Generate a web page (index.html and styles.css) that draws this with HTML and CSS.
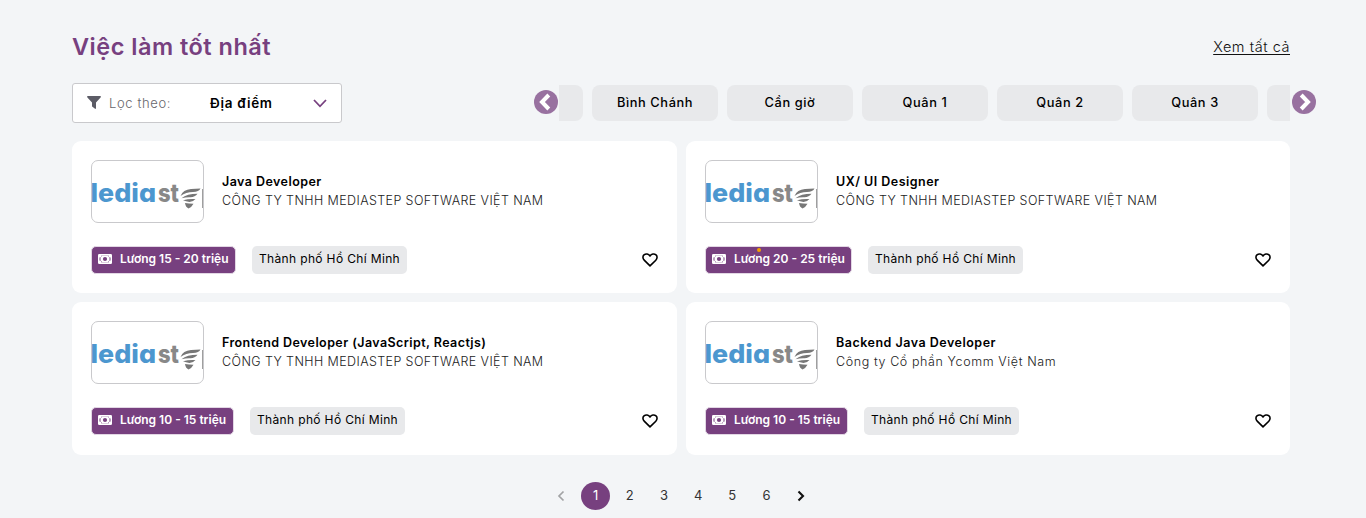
FILE: index.html
```html
<!DOCTYPE html>
<html lang="vi">
<head>
<meta charset="utf-8">
<title>Việc làm tốt nhất</title>
<link rel="stylesheet" href="styles.css">
</head>
<body>
<svg class="sprite" aria-hidden="true">
  <symbol id="logo" viewBox="0 0 111 61">
    <text class="logo-blue" x="-1.500" y="41" textLength="65.500" lengthAdjust="spacingAndGlyphs">ledia</text>
    <text class="logo-gray" x="66" y="40.500" textLength="21" lengthAdjust="spacingAndGlyphs">st</text>
    <path class="logo-wing" d="M88.500 35Q91 28.500 99 28L108.500 27.500Q107 30.800 101 31Q94 31 88.500 35ZM89.500 37.200Q95 32.800 105.500 32.800Q103 36.200 98.500 36.200Q94 36 89.500 37.200ZM91 39.200Q97 37.500 103.500 38Q101 41 97.500 41Q94 40.500 91 39.200ZM93 42Q97 42.500 101.500 42.800Q99.500 46.500 96.500 47.500Q93.500 46 93 42ZM110.300 28H111V47H110.300Z"/>
  </symbol>
  <symbol id="money" viewBox="0 0 14 10">
    <rect width="14" height="10" rx="1.200" fill="#fff"/>
    <path d="M3.500 1.500h7a2 2 0 0 0 2 2v3a2 2 0 0 0-2 2h-7a2 2 0 0 0-2-2v-3a2 2 0 0 0 2-2Z" fill="#77407f"/>
    <path d="M4 1.500h6a2 2 0 0 0 1.500 1.700v3.600a2 2 0 0 0-1.500 1.700H4a2 2 0 0 0-1.500-1.700V3.200a2 2 0 0 0 1.500-1.700Z" fill="#fff"/>
    <circle cx="7" cy="5" r="2.100" fill="#77407f"/>
  </symbol>
  <symbol id="heart" viewBox="0 0 16 14">
    <path d="M8 12.800L2.200 7.200C.5 5.500.6 3.100 2 1.900C3.900.4 6.500.8 8 3C9.500.8 12.100.4 14 1.900C15.400 3.100 15.500 5.500 13.800 7.200Z" fill="none" stroke="#000" stroke-width="1.600" stroke-linejoin="round"/>
  </symbol>
  <symbol id="prev" viewBox="0 0 24 24">
    <circle cx="12" cy="12" r="12" fill="#9871a0"/>
    <path d="M14.800 5L8 12l6.800 7" fill="none" stroke="#fff" stroke-width="4"/>
  </symbol>
</svg>
<main class="page">
  <header class="head">
    <h1 class="title">Việc làm tốt nhất</h1>
    <a class="all" href="#">Xem tất cả</a>
  </header>
  <div class="filters">
    <div class="select">
      <svg class="funnel" viewBox="0 0 14 13"><path d="M.8 0H13.200Q14.400.3 13.600 1.400L9 6.500V12.300Q8.600 13.300 7.700 12.600L5.400 10.800Q5 10.500 5 10V6.500L.4 1.400Q-.4.3.8 0Z" fill="#5c5c66"/></svg>
      <span class="select-label">Lọc theo:</span>
      <span class="select-value">Địa điểm</span>
      <svg class="chevron" viewBox="0 0 14 9"><path d="M1 1l6 6.300L13 1" fill="none" stroke="#77407f" stroke-width="1.800"/></svg>
    </div>
    <div class="carousel">
      <svg class="arrow"><use href="#prev"/></svg>
      <div class="track">
        <span class="chip chip-first"></span>
        <span class="chip">Bình Chánh</span>
        <span class="chip">Cần giờ</span>
        <span class="chip">Quân 1</span>
        <span class="chip">Quân 2</span>
        <span class="chip">Quân 3</span>
        <span class="chip"></span>
      </div>
      <svg class="arrow arrow-next"><use href="#prev"/></svg>
    </div>
  </div>
  <section class="jobs">
    <article class="card">
      <div class="job">
        <svg class="logo"><use href="#logo"/></svg>
        <div class="info"><h2 class="name n1">Java Developer</h2><p class="company">CÔNG TY TNHH MEDIASTEP SOFTWARE VIỆT NAM</p></div>
      </div>
      <div class="tags">
        <span class="salary s1"><svg class="money"><use href="#money"/></svg><span>Lương 15 - 20 triệu</span></span>
        <span class="place">Thành phố Hồ Chí Minh</span>
        <svg class="heart"><use href="#heart"/></svg>
      </div>
    </article>
    <article class="card">
      <div class="job">
        <svg class="logo"><use href="#logo"/></svg>
        <div class="info"><h2 class="name n2">UX/ UI Designer</h2><p class="company">CÔNG TY TNHH MEDIASTEP SOFTWARE VIỆT NAM</p></div>
      </div>
      <div class="tags">
        <span class="salary s2"><svg class="money"><use href="#money"/></svg><span>Lương 20 - 25 triệu</span><i class="dot"></i></span>
        <span class="place">Thành phố Hồ Chí Minh</span>
        <svg class="heart"><use href="#heart"/></svg>
      </div>
    </article>
    <article class="card">
      <div class="job">
        <svg class="logo"><use href="#logo"/></svg>
        <div class="info"><h2 class="name n3">Frontend Developer (JavaScript, Reactjs)</h2><p class="company">CÔNG TY TNHH MEDIASTEP SOFTWARE VIỆT NAM</p></div>
      </div>
      <div class="tags">
        <span class="salary s3"><svg class="money"><use href="#money"/></svg><span>Lương 10 - 15 triệu</span></span>
        <span class="place">Thành phố Hồ Chí Minh</span>
        <svg class="heart"><use href="#heart"/></svg>
      </div>
    </article>
    <article class="card">
      <div class="job">
        <svg class="logo"><use href="#logo"/></svg>
        <div class="info"><h2 class="name n4">Backend Java Developer</h2><p class="company company-short">Công ty Cổ phần Ycomm Việt Nam</p></div>
      </div>
      <div class="tags">
        <span class="salary s3"><svg class="money"><use href="#money"/></svg><span>Lương 10 - 15 triệu</span></span>
        <span class="place">Thành phố Hồ Chí Minh</span>
        <svg class="heart"><use href="#heart"/></svg>
      </div>
    </article>
  </section>
  <nav class="pager">
    <span class="pg"><svg class="pgi" viewBox="0 0 8 12"><path d="M6.500 1.500L2 6l4.500 4.500" fill="none" stroke="#a2a3a5" stroke-width="1.700"/></svg></span>
    <span class="pg current">1</span><span class="pg">2</span><span class="pg">3</span><span class="pg">4</span><span class="pg">5</span><span class="pg">6</span>
    <span class="pg"><svg class="pgi" viewBox="0 0 8 12"><path d="M1.500 1.500L6 6l-4.500 4.500" fill="none" stroke="#111" stroke-width="2.100"/></svg></span>
  </nav>
</main>
<div class="scrollbar"><div class="thumb"></div></div>
</body>
</html>
```
FILE: styles.css
```css
* { box-sizing: border-box; }
body {
  margin: 0;
  height: 518px;
  display: flex;
  overflow: hidden;
  background: #f3f5f7;
  color: #000;
  font-family: Inter, "Open Sans", sans-serif;
  font-size: 13px;
}
.sprite { position: absolute; width: 0; height: 0; }
.page { flex: 1; padding: 32px 72px 0 72px; }
.head { display: flex; justify-content: space-between; align-items: center; width: 1218px; height: 30px; }
.title { margin: 0; color: #77407f; font-size: 23.5px; font-weight: 600; letter-spacing: .5px; line-height: 30px; }
.all { margin-top: -2px; color: #111; font-size: 14.5px; font-weight: 300; letter-spacing: .55px; text-underline-offset: 2px; }
.filters { display: flex; justify-content: space-between; width: 1244px; margin-top: 21px; height: 40px; }
.select { display: flex; align-items: center; width: 270px; height: 40px; padding: 0 14px 0 14px; background: #fff; border: 1px solid #c9c9cc; border-radius: 3px; }
.funnel { width: 14px; height: 13px; margin-top: -2px; }
.select-label { flex: none; width: 109px; padding-left: 8px; color: #66666b; font-weight: 300; letter-spacing: .62px; }
.select-value { flex: 1; font-weight: 600; font-size: 13.5px; letter-spacing: .72px; }
.chevron { width: 14px; height: 9px; }
.carousel { display: flex; align-items: center; height: 40px; }
.arrow { width: 24px; height: 24px; margin: -3px 1px 0 0; }
.arrow-next { margin: -3px 0 0 2px; transform: scaleX(-1); }
.track { display: flex; gap: 9px; width: 731px; height: 36px; overflow: hidden; }
.chip { flex: none; width: 126px; height: 36px; border-radius: 8px; background: #e8e9eb; text-align: center; line-height: 36px; font-weight: 500; font-size: 12.8px; letter-spacing: .6px; }
.chip-first { width: 24px; border-radius: 0 8px 8px 0; }
.jobs { display: grid; grid-template-columns: 605px 604px; grid-template-rows: 152px 153px; gap: 9px; margin-top: 18px; }
.card { padding: 19px; border-radius: 9px; background: #fff; }
.job { display: flex; align-items: center; gap: 18px; }
.info { padding-bottom: 2px; }
.logo { width: 113px; height: 63px; border: 1px solid #c9c9cc; border-radius: 7px; }
.logo-blue, .logo-gray { font-family: Inter, sans-serif; font-weight: 800; font-feature-settings: "cv11"; }
.logo-blue { font-size: 25.5px; fill: #4c97cf; }
.logo-gray { font-size: 25px; fill: #888; }
.logo-wing { fill: #777; }
.name, .company { margin: 0; line-height: 19px; font-size: 12.5px; white-space: nowrap; }
.name { font-weight: 600; }
.n1 { letter-spacing: .44px; }
.n2 { letter-spacing: .48px; }
.n3 { letter-spacing: .42px; }
.n4 { letter-spacing: .5px; }
.company { color: #222; font-weight: 300; letter-spacing: .4px; }
.company-short { letter-spacing: .6px; }
.tags { display: flex; align-items: center; height: 28px; margin-top: 23px; gap: 16px; }
.salary { position: relative; display: flex; align-items: center; gap: 8px; height: 28px; padding: 0 0 3px 6px; color: #fff; background: #77407f; border: 1px solid #e2d7e4; border-radius: 5px; font-size: 12px; font-weight: 600; white-space: nowrap; }
.s1 { width: 145px; }
.s2 { width: 147px; }
.s3 { width: 143px; }
.money { width: 14px; height: 10px; }
.dot { position: absolute; left: 51px; top: 1px; width: 4px; height: 4px; border-radius: 50%; background: #f5a000; }
.place { width: 155px; height: 28px; border-radius: 5px; background: #e8e9eb; text-align: center; line-height: 26px; font-size: 12px; letter-spacing: .35px; white-space: nowrap; }
.heart { width: 16px; height: 14px; margin: -1px 0 0 auto; }
.pager { display: flex; justify-content: center; margin-top: 27px; gap: 5.2px; width: 1218px; color: #333; font-size: 13px; }
.pg { display: flex; align-items: center; justify-content: center; width: 29px; height: 28px; padding-bottom: 2px; }
.pgi { width: 8px; height: 12px; margin-top: 2px; }
.current { border-radius: 50%; background: #77407f; color: #fff; }
.scrollbar { width: 4px; height: 518px; padding-top: 27px; background: #d2d2d2; }
.thumb { height: 123px; background: #bababa; }
```
